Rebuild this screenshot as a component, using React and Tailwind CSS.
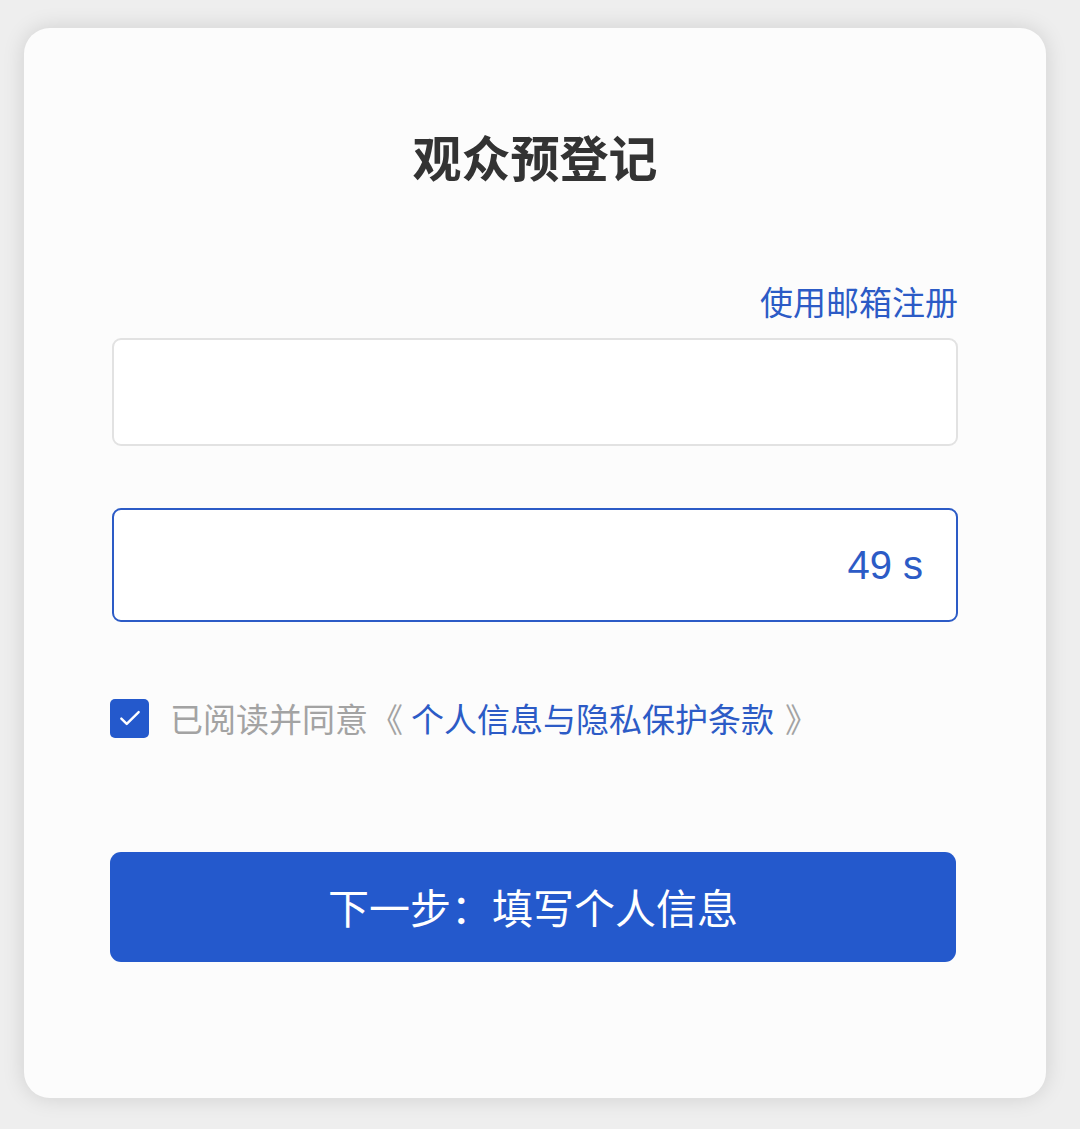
export default function App() {
  const font = { fontFamily: '"Noto Sans CJK SC", "Noto Sans", sans-serif' };
  return (
    <div className="w-[1080px] h-[1129px] bg-[#eeeeee] pt-[28px] pl-[24px]" style={font}>
      <div className="w-[1022px] h-[1070px] bg-[#fcfcfc] rounded-[26px] shadow-[0_0_22px_rgba(0,0,0,0.13)] px-[88px] flex flex-col">
        <h1 className="mt-[94px] text-center text-[49px] leading-[68px] font-bold text-[#333333]">观众预登记</h1>
        <div className="mt-[89px] flex justify-end">
          <span className="text-[33px] leading-[44px] text-[#2c5bc6]">使用邮箱注册</span>
        </div>
        <div className="mt-[15px] h-[108px] rounded-[9px] border-2 border-[#e2e2e2] bg-white"></div>
        <div className="mt-[62px] h-[114px] rounded-[9px] border-2 border-[#2c5bc6] bg-white flex items-center justify-end pr-[33px]">
          <span className="text-[40px] leading-[44px] text-[#2c5bc6]" style={{ fontFamily: '"Liberation Sans", Arial, sans-serif' }}>49 s</span>
        </div>
        <div className="mt-[74px] flex items-center h-[44px]">
          <div className="w-[39px] h-[39px] rounded-[5px] bg-[#2459cc] flex items-center justify-center -ml-[2px]">
            <svg width="26" height="26" viewBox="0 0 24 24" fill="none" stroke="white" strokeWidth="2.2" strokeLinecap="round" strokeLinejoin="round">
              <path d="M4 12.5l5 5L20 6.5" />
            </svg>
          </div>
          <div className="ml-[21px] flex items-center leading-[44px] text-[33px] text-[#a3a3a3] whitespace-nowrap">
            <span>已阅读并同意</span>
            <span className="ml-[2px]">《</span>
            <span className="ml-[8px] text-[#2c5bc6]">个人信息与隐私保护条款</span>
            <span className="ml-[11px]">》</span>
          </div>
        </div>
        <button className="mt-[112px] -ml-[2px] w-[846px] h-[110px] rounded-[11px] bg-[#2459cc] text-white text-[41px] flex items-center justify-center">
          下一步：填写个人信息
        </button>
      </div>
    </div>
  );
}
